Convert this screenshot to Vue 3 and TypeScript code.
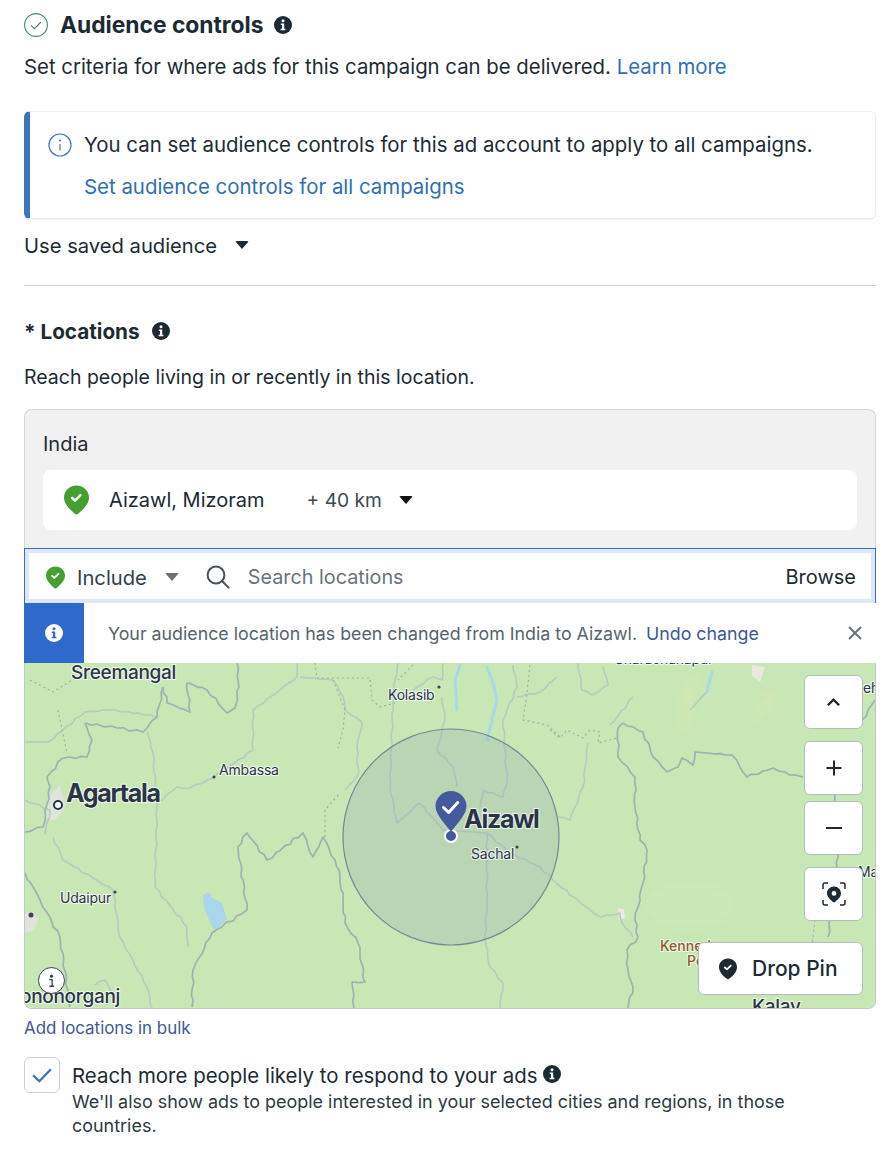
<script setup lang="ts">
interface Label { x: number; y: number; t: string; c: string }
const labels: Label[] = [
  { x: 71, y: 679, t: 'Sreemangal', c: 'l-md' },
  { x: 66, y: 802, t: 'Agartala', c: 'l-lg' },
  { x: 464, y: 828, t: 'Aizawl', c: 'l-lg' },
  { x: 471, y: 859, t: 'Sachal', c: 'l-sm' },
  { x: 388, y: 700, t: 'Kolasib', c: 'l-sm' },
  { x: 219, y: 775, t: 'Ambassa', c: 'l-sm' },
  { x: 60, y: 903, t: 'Udaipur', c: 'l-sm' },
  { x: 20, y: 1003, t: 'ononorganj', c: 'l-md' },
  { x: 752, y: 1013, t: 'Kalay', c: 'l-md' },
  { x: 858, y: 877, t: 'Ma', c: 'l-sm' },
  { x: 863, y: 693, t: 'eh', c: 'l-sm' },
  { x: 615, y: 664, t: 'Sharachanapur', c: 'l-sm' },
  { x: 660, y: 951, t: 'Kennedy', c: 'l-br' },
  { x: 687, y: 966, t: 'Peak', c: 'l-br' },
]

/* Turns a coarse polyline into an organic line: extra points with a repeatable offset. */
function wiggle(points: number[][], amp = 1.1): string {
  let out = ''
  points.forEach((p, i) => {
    if (i === 0) {
      out += `M${p[0]} ${p[1]}`
      return
    }
    const q = points[i - 1]
    const len = Math.hypot(p[0] - q[0], p[1] - q[1])
    const steps = Math.max(1, Math.round(len / 6))
    for (let s = 1; s <= steps; s++) {
      const t = s / steps
      const edge = s === steps ? 0 : 1
      const seed = q[0] * 0.37 + q[1] * 0.91 + s * 1.9
      const dx = Math.sin(seed * 2.3) * amp * edge
      const dy = Math.cos(seed * 1.7) * amp * edge
      out += `L${(q[0] + (p[0] - q[0]) * t + dx).toFixed(1)} ${(q[1] + (p[1] - q[1]) * t + dy).toFixed(1)}`
    }
  })
  return out
}

const strong: number[][][] = [
  [[163, 687], [167, 703], [190, 712], [187, 683], [207, 690], [227, 713], [235, 708], [239, 687], [237, 663]],
  [[85, 723], [92, 740], [87, 757], [63, 758], [47, 777], [50, 787], [43, 827], [25, 832]],
  [[85, 723], [117, 728], [143, 732], [157, 717], [163, 687]],
  [[192, 1007], [193, 970], [212, 933], [247, 910], [238, 847], [247, 833], [267, 860], [303, 833], [313, 857], [323, 837], [335, 860], [340, 877], [343, 900], [345, 923], [358, 943], [365, 982], [352, 982], [354, 1008]],
  [[623, 723], [643, 732], [653, 757], [667, 772], [678, 767], [682, 758], [693, 765], [695, 752], [708, 753], [732, 755], [747, 777], [773, 768], [790, 775], [803, 777]],
  [[623, 723], [618, 728], [618, 757], [635, 777], [635, 807], [640, 840], [647, 850], [643, 883], [635, 920], [638, 937], [627, 950], [628, 970], [633, 987], [628, 1008]],
  [[25, 873], [40, 900], [60, 937], [70, 1007]],
  [[835, 795], [838, 857], [828, 937]],
  [[862, 720], [875, 700]],
]
const soft: number[][][] = [
  [[25, 742], [48, 742], [85, 712], [110, 710], [150, 715], [157, 717]],
  [[147, 732], [153, 753], [157, 807], [155, 887], [187, 927], [188, 947]],
  [[157, 803], [177, 787], [190, 788], [213, 778], [253, 750], [253, 710], [297, 677], [297, 663]],
  [[53, 837], [63, 860], [113, 890], [120, 937], [147, 987], [152, 1008]],
  [[300, 677], [333, 680], [343, 697], [345, 710], [362, 722], [357, 748], [358, 775], [345, 790]],
  [[398, 663], [395, 680], [393, 703], [390, 787], [397, 823], [420, 803], [443, 830], [487, 833], [510, 853], [540, 867], [553, 880], [583, 905], [600, 917], [620, 913], [622, 923], [633, 937]],
  [[443, 663], [442, 680], [433, 677], [413, 690]],
  [[442, 697], [445, 720], [437, 750], [453, 767], [457, 787]],
  [[487, 833], [487, 900], [485, 940], [490, 967], [503, 983], [500, 1008]],
  [[513, 665], [517, 687], [503, 720], [507, 780], [503, 797], [483, 790], [480, 807]],
  [[517, 697], [540, 692], [557, 677]],
  [[578, 663], [582, 690], [592, 695], [608, 685], [603, 667]],
  [[588, 743], [583, 787], [570, 820], [558, 817]],
  [[633, 697], [617, 717], [610, 725]],
  [[707, 692], [690, 710]],
  [[25, 800], [50, 810], [45, 835]],
  [[95, 985], [105, 980], [115, 1000]],
]
const dotted: string[] = [
  'M58 710L67 753',
  'M30 680L53 692L77 677',
  'M325 837L325 810L340 793',
  'M315 663L317 678L370 678L372 700L380 707L395 703',
  'M333 680L345 710L343 730L338 748',
  'M413 665L398 680',
  'M530 665L527 693L523 720L547 725L560 737',
  'M550 730L560 738L567 730L583 738L590 730L600 732L598 743L617 738',
  'M815 920L812 945',
]
const strongPaths = strong.map((p) => wiggle(p))
const softPaths = soft.map((p) => wiggle(p, 0.8))
</script>

<template>
  <main class="page">
    <header class="title-row">
      <svg class="check-ring" viewBox="0 0 24 24" aria-hidden="true">
        <circle cx="12" cy="12" r="11.400" />
        <path d="M7 12.400l3.400 3.300L17 9" />
      </svg>
      <h1>Audience controls</h1>
      <svg class="info-solid" viewBox="0 0 18 18" aria-hidden="true">
        <circle cx="9" cy="9" r="9" />
        <circle cx="9" cy="4.800" r="1.500" class="i-w" />
        <path d="M6.800 7.500h3.400v5.200h1.200v1.600H6.600v-1.600h1.400V9.100H6.800z" class="i-w" />
      </svg>
    </header>
    <p class="lead">Set criteria for where ads for this campaign can be delivered. <a>Learn more</a></p>

    <section class="callout">
      <svg class="info-line" viewBox="0 0 24 24" aria-hidden="true">
        <circle cx="12" cy="12" r="11" />
        <circle cx="12" cy="7.500" r="1" class="dot" />
        <path d="M12 11v6.500" />
      </svg>
      <div class="callout-body">
        <p>You can set audience controls for this ad account to apply to all campaigns.</p>
        <a>Set audience controls for all campaigns</a>
      </div>
    </section>

    <div class="saved"><span>Use saved audience</span><i class="caret"></i></div>
    <hr />

    <div class="loc-title">
      <h2>* Locations</h2>
      <svg class="info-solid small" viewBox="0 0 18 18" aria-hidden="true">
        <circle cx="9" cy="9" r="9" />
        <circle cx="9" cy="4.800" r="1.500" class="i-w" />
        <path d="M6.800 7.500h3.400v5.200h1.200v1.600H6.600v-1.600h1.400V9.100H6.800z" class="i-w" />
      </svg>
    </div>
    <p class="reach">Reach people living in or recently in this location.</p>

    <section class="locbox">
      <div class="country">India</div>
      <div class="chip">
        <svg class="pin" viewBox="0 0 26 30" aria-hidden="true">
          <path d="M13 0C5.800 0 0 5.600 0 12.400c0 7 6.800 13.200 11.300 16.800a2.700 2.700 0 0 0 3.400 0C19.200 25.600 26 19.400 26 12.400 26 5.600 20.200 0 13 0z" />
          <path d="M8.400 12.800l3 2.800 5.600-5.600" class="pin-check" />
        </svg>
        <span class="city">Aizawl, Mizoram</span>
        <span class="km">+ 40 km</span>
        <i class="caret black"></i>
      </div>

      <div class="search-wrap">
        <div class="search">
          <svg class="pin mini" viewBox="0 0 26 30" aria-hidden="true">
            <path d="M13 0C5.800 0 0 5.600 0 12.400c0 7 6.800 13.200 11.300 16.800a2.700 2.700 0 0 0 3.400 0C19.200 25.600 26 19.400 26 12.400 26 5.600 20.200 0 13 0z" />
            <path d="M8.400 12.800l3 2.800 5.600-5.600" class="pin-check" />
          </svg>
          <span class="include">Include</span>
          <i class="caret grey"></i>
          <svg class="mag" viewBox="0 0 24 24" aria-hidden="true">
            <circle cx="10" cy="10" r="8.400" />
            <path d="M16.200 16.200L22.600 22.600" />
          </svg>
          <span class="placeholder">Search locations</span>
          <span class="browse">Browse</span>
        </div>
      </div>

      <div class="notice">
        <div class="notice-icon">
          <svg viewBox="0 0 18 18" aria-hidden="true">
            <circle cx="9" cy="9" r="9" fill="#fff" />
            <circle cx="9" cy="4.800" r="1.500" fill="#2f69c9" />
            <path d="M6.800 7.500h3.400v5.200h1.200v1.600H6.600v-1.600h1.400V9.100H6.800z" fill="#2f69c9" />
          </svg>
        </div>
        <p>Your audience location has been changed from India to Aizawl.</p>
        <a>Undo change</a>
        <svg class="close" viewBox="0 0 16 16" aria-hidden="true"><path d="M2 2l12 12M14 2L2 14" /></svg>
      </div>

      <div class="map">
        <svg class="map-art" viewBox="25 663 850 345" aria-hidden="true">
          <rect x="25" y="663" width="850" height="345" fill="#c7e7b5" />
          <g class="patches">
            <path d="M680 700l10-20 10-10-10 30 0 20-8 18z" fill="#d3e8b0" />
            <path d="M750 723l17-33 8 10-20 25z" fill="#d3e8b0" />
            <ellipse cx="690" cy="905" rx="45" ry="24" fill="#c9eab8" />
          </g>
          <path d="M752 665l13 2-5 15-8-6z" fill="#ece8e0" />
          <path d="M618 908l6 1 1 9-6 2z" fill="#eceae4" />
          <path d="M50 795l10-10 6 22-12 14-8-4z" fill="#dfe3da" />
          <path d="M25 913l8-2 6 8-6 12-8 2z" fill="#dfe3da" />
          <g class="soft-lines">
            <path v-for="(d, i) in softPaths" :key="i" :d="d" />
          </g>
          <g class="strong-lines">
            <path v-for="(d, i) in strongPaths" :key="i" :d="d" />
          </g>
          <g class="borders">
            <path v-for="(d, i) in dotted" :key="i" :d="d" />
          </g>
          <path class="lake" d="M203 895l6-3 3 6 10 5 3 10 2 6-8 8-5 3-4-8-6-14z" />
          <path class="stream" d="M460 665l-5 15 2 30M487 667l6 16 4 17-10 40M712 672l-5 20" />
          <circle cx="451" cy="837" r="108" class="radius" />
          <text v-for="l in labels" :key="l.t" :x="l.x" :y="l.y" :class="['lbl', l.c]">{{ l.t }}</text>
          <circle cx="58" cy="805" r="4" class="city-o" />
          <circle cx="214" cy="777" r="1.600" fill="#3b4452" />
          <circle cx="115" cy="892" r="1.600" fill="#3b4452" />
          <circle cx="31" cy="915" r="2.500" fill="#3b4452" />
          <circle cx="517" cy="847" r="1.600" fill="#3b4452" />
          <circle cx="439" cy="687" r="1.600" fill="#3b4452" />
          <circle cx="451" cy="836" r="6" fill="#445a9e" stroke="#fff" stroke-width="2" />
          <path d="M451 791c-8.500 0-15.500 6.800-15.500 15 0 8 8 16 15.500 26 7.500-10 15.500-18 15.500-26 0-8.200-7-15-15.500-15z" fill="#445a9e" />
          <path d="M443.500 807.500l5.200 5 9-10" class="marker-check" />
        </svg>

        <button class="map-info" type="button" aria-label="Map info">
          <svg viewBox="0 0 10 16" aria-hidden="true"><circle cx="5" cy="2.500" r="1.800" /><path d="M2.500 6.500h3.200v7M2.500 14h5.500" /></svg>
        </button>

        <div class="controls">
          <button type="button" class="ctl up" aria-label="Collapse">
            <svg viewBox="0 0 16 10"><path d="M2 8.500l6-6 6 6" /></svg>
          </button>
          <button type="button" class="ctl plus" aria-label="Zoom in">
            <svg viewBox="0 0 16 16"><path d="M8 .500v15M.500 8h15" /></svg>
          </button>
          <button type="button" class="ctl minus" aria-label="Zoom out">
            <svg viewBox="0 0 16 4"><path d="M0 2h16" /></svg>
          </button>
          <button type="button" class="ctl locate" aria-label="Locate">
            <svg viewBox="0 0 24 24">
              <path class="corner" d="M1 7V3a2 2 0 0 1 2-2h3M18 1h3a2 2 0 0 1 2 2v4M23 18v3a2 2 0 0 1-2 2h-3M6 23H3a2 2 0 0 1-2-2v-3" />
              <path class="locpin" fill-rule="evenodd" d="M12 4.500c-4 0-7 3-7 6.800 0 3.700 3.800 6.900 6 8.700a1.600 1.600 0 0 0 2 0c2.200-1.800 6-5 6-8.700 0-3.800-3-6.800-7-6.800zm0 4.500a2.400 2.400 0 1 1 0 4.800 2.400 2.400 0 0 1 0-4.800z" />
            </svg>
          </button>
          <button type="button" class="drop">
            <svg viewBox="0 0 26 30" aria-hidden="true">
              <path d="M13 0C5.800 0 0 5.600 0 12.400c0 7 6.800 13.200 11.300 16.800a2.700 2.700 0 0 0 3.400 0C19.200 25.600 26 19.400 26 12.400 26 5.600 20.200 0 13 0z" fill="#1c2b33" />
              <path d="M8.400 12.800l3 2.800 5.600-5.600" class="pin-check" />
            </svg>
            <span>Drop Pin</span>
          </button>
        </div>
      </div>
    </section>

    <a class="bulk">Add locations in bulk</a>

    <label class="check">
      <span class="box">
        <svg viewBox="0 0 24 18" aria-hidden="true"><path d="M2 9.500l7 6.500L22 2.500" /></svg>
      </span>
      <span class="check-text">
        <span class="check-title">Reach more people likely to respond to your ads
          <svg class="info-solid tiny" viewBox="0 0 18 18" aria-hidden="true">
            <circle cx="9" cy="9" r="9" />
            <circle cx="9" cy="4.800" r="1.500" class="i-w" />
            <path d="M6.800 7.500h3.400v5.200h1.200v1.600H6.600v-1.600h1.400V9.100H6.800z" class="i-w" />
          </svg>
        </span>
        <span class="check-sub">We'll also show ads to people interested in your selected cities and regions, in those countries.</span>
      </span>
    </label>
  </main>
</template>

<style>
html, body { background: #fff; }
</style>

<style scoped>
.page {
  width: 892px;
  height: 1158px;
  box-sizing: border-box;
  padding: 12px 16px 0 24px;
  overflow: hidden;
  font-family: Inter, "Liberation Sans", sans-serif;
  color: #1c2b33;
  font-size: 20px;
}
p, h1, h2 { margin: 0; font-weight: inherit; }
a { color: #2f6fb3; }

.title-row { display: flex; align-items: center; height: 26px; }
.check-ring { width: 24px; height: 24px; flex: none; fill: none; stroke: #3f8a6b; stroke-width: 1.100; }
h1 { margin-left: 12px; font-size: 22.800px; font-weight: 700; line-height: 26px; }
.info-solid { width: 18px; height: 18px; flex: none; fill: #1c2b33; margin-left: 10px; }
.i-w { fill: #fff; }
.lead { margin-top: 14px; line-height: 30px; font-size: 20.350px; }

.callout {
  margin-top: 29px;
  height: 108px;
  box-sizing: border-box;
  display: flex;
  background: #fff;
  border: 1px solid #eceef0;
  border-left: 6px solid #3a75b8;
  border-radius: 6px;
  padding: 19px 0 0 18px;
  box-shadow: 0 1px 2px rgba(0, 0, 0, 0.06);
}
.info-line { width: 24px; height: 24px; flex: none; fill: none; stroke: #3a75b8; stroke-width: 1.200; margin-top: 2px; }
.info-line .dot { fill: #3a75b8; stroke: none; }
.callout-body { margin-left: 12px; line-height: 28px; font-size: 20.420px; }
.callout-body a { display: block; margin-top: 14px; }

.saved { display: flex; align-items: center; height: 30px; margin-top: 11px; font-size: 20.200px; }
.caret { display: block; width: 0; height: 0; border-left: 7px solid transparent; border-right: 7px solid transparent; border-top: 8px solid #1c2b33; margin-left: 18px; border-radius: 2px; }
hr { border: 0; border-top: 1px solid #cfd2d4; margin: 25px 0 0; }

.loc-title { display: flex; align-items: center; margin-top: 31px; height: 28px; }
h2 { font-size: 20.700px; font-weight: 700; }
.info-solid.small { margin-left: 12px; }
.reach { margin-top: 18px; line-height: 28px; font-size: 19.500px; }

.locbox {
  margin-top: 18px;
  box-shadow: inset 0 0 0 1px #d5d7d9;
  border-radius: 8px;
  background: #f1f1f1;
  overflow: hidden;
  height: 600px;
  box-sizing: border-box;
}
.country { padding: 20px 19px 0; line-height: 30px; }
.chip {
  margin: 11px 19px 0;
  height: 60px;
  background: #fff;
  border-radius: 8px;
  display: flex;
  align-items: center;
  padding-left: 21px;
}
.pin { width: 25px; height: 30px; fill: #46a030; flex: none; }
.pin-check { fill: none; stroke: #fff; stroke-width: 2.600; stroke-linecap: round; stroke-linejoin: round; }
.city { margin-left: 20px; }
.km { margin-left: 42px; color: #3c4a52; font-size: 19.200px; }
.caret.black { margin-left: 17px; border-top-color: #111; }

.search-wrap {
  margin-top: 18px;
  border: 1px solid #3a6fc0;
  border-bottom: 0;
  background: #dde7f7;
  padding: 4px;
  height: 55px;
  box-sizing: border-box;
}
.search { height: 46px; box-sizing: border-box; padding: 2px 15px 0 17px; background: #fff; display: flex; align-items: center; }
.pin.mini { width: 19px; height: 23px; }
.include { margin-left: 12px; color: #33414a; font-size: 20.200px; }
.caret.grey { border-top-color: #67737a; margin-left: 18px; }
.mag { width: 24px; height: 24px; margin-left: 27px; fill: none; stroke: #465159; stroke-width: 2; stroke-linecap: round; flex: none; }
.placeholder { margin-left: 18px; color: #67737a; font-size: 19.800px; }
.browse { margin-left: auto; color: #1c2b33; }

.notice { height: 60px; background: #fff; display: flex; align-items: center; font-size: 17.800px; color: #56646c; }
.notice-icon { width: 60px; align-self: stretch; background: #2f69c9; display: flex; align-items: center; justify-content: center; flex: none; }
.notice-icon svg { width: 18px; height: 18px; }
.notice p { margin-left: 24px; }
.notice a { color: #3b5998; margin-left: 9px; }
.close { width: 16px; height: 16px; margin-left: auto; margin-right: 13px; fill: none; stroke: #67737a; stroke-width: 2; }

.map { position: relative; box-sizing: border-box; height: 346px; border: 1px solid #c2c7c9; border-top: 0; border-radius: 0 0 8px 8px; overflow: hidden; }
.map-art { display: block; width: 850px; height: 345px; }
.patches { filter: blur(4px); }
.soft-lines path { fill: none; stroke: #b6cbc0; stroke-width: 1.600; stroke-linejoin: round; filter: blur(0.3px); }
.strong-lines path { fill: none; stroke: #9db3b0; stroke-width: 1.700; stroke-linejoin: round; filter: blur(0.3px); }
.borders path { fill: none; stroke: #9dafaa; stroke-width: 1.200; stroke-dasharray: 2 3; }
.lake { fill: #a9d6e8; filter: blur(0.5px); }
.stream { fill: none; stroke: #a9d9e6; stroke-width: 3; stroke-linecap: round; filter: blur(0.5px); }
.radius { fill: rgba(139, 163, 177, 0.25); stroke: #6f8b96; stroke-width: 1.200; }
.lbl { fill: #2a3547; stroke: rgba(255, 255, 255, 0.75); stroke-width: 2px; paint-order: stroke; font-family: Inter, "Liberation Sans", sans-serif; }
.l-lg { font-size: 25px; font-weight: 700; letter-spacing: -1.300px; }
.l-md { font-size: 19px; font-weight: 500; letter-spacing: -0.300px; }
.l-sm { font-size: 14px; font-weight: 400; letter-spacing: -0.200px; }
.l-br { font-size: 14px; fill: #8a5a2b; font-weight: 500; }
.city-o { fill: #fff; stroke: #2a3547; stroke-width: 2; }
.marker-check { fill: none; stroke: #fff; stroke-width: 3; stroke-linecap: round; stroke-linejoin: round; }

.map-info {
  position: absolute; left: 13px; top: 304px;
  width: 27px; height: 27px; padding: 0;
  border-radius: 50%; border: 1px solid #36424a; background: #fff;
  display: flex; align-items: center; justify-content: center;
}
.map-info svg { width: 9px; height: 14px; fill: #36424a; stroke: #36424a; stroke-width: 1.500; }
.map-info svg path { fill: none; }
.map-info svg circle { stroke: none; }

.controls { position: absolute; right: 12px; top: 12px; display: flex; flex-direction: column; align-items: flex-end; }
.ctl {
  width: 59px; height: 54px; padding: 0;
  background: #fff; border: 1px solid #b5bcc0; border-radius: 6px;
  display: flex; align-items: center; justify-content: center;
}
.ctl svg { fill: none; stroke: #1c2b33; stroke-width: 2; }
.up svg { width: 15px; height: 10px; stroke-width: 2.500; }
.plus { margin-top: 12px; }
.plus svg { width: 16px; height: 16px; }
.minus { margin-top: 6px; }
.minus svg { width: 16px; height: 4px; }
.locate { margin-top: 12px; }
.locate svg { width: 24px; height: 24px; }
.corner { stroke-width: 1.500; }
.locpin { fill: #1c2b33; stroke: none; }
.drop {
  margin-top: 21px;
  width: 165px; height: 53px; padding: 0 0 0 20px;
  background: #fff; border: 1px solid #b5bcc0; border-radius: 6px;
  display: flex; align-items: center;
  font: 500 21px Inter, "Liberation Sans", sans-serif; color: #1c2b33;
}
.drop svg { width: 18px; height: 22px; flex: none; }
.drop span { margin-left: 15px; }

.bulk { display: block; margin-top: 8px; font-size: 16.900px; line-height: 22px; color: #3b5998; }

.check { display: flex; margin-top: 18px; }
.box {
  width: 36px; height: 36px; box-sizing: border-box; flex: none;
  border: 1px solid #ccd0d3; border-radius: 6px;
  display: flex; align-items: center; justify-content: center;
}
.box svg { width: 22px; height: 16px; fill: none; stroke: #3a75b8; stroke-width: 2.600; }
.check-text { margin-left: 12px; display: block; }
.check-title { display: flex; align-items: center; line-height: 28px; height: 36px; font-size: 20.440px; padding-top: 1px; box-sizing: border-box; }
.info-solid.tiny { margin-left: 5px; margin-top: -3px; }
.check-sub { display: block; font-size: 17.950px; line-height: 24px; margin-top: -3px; color: #2d3a42; max-width: 770px; }
</style>
